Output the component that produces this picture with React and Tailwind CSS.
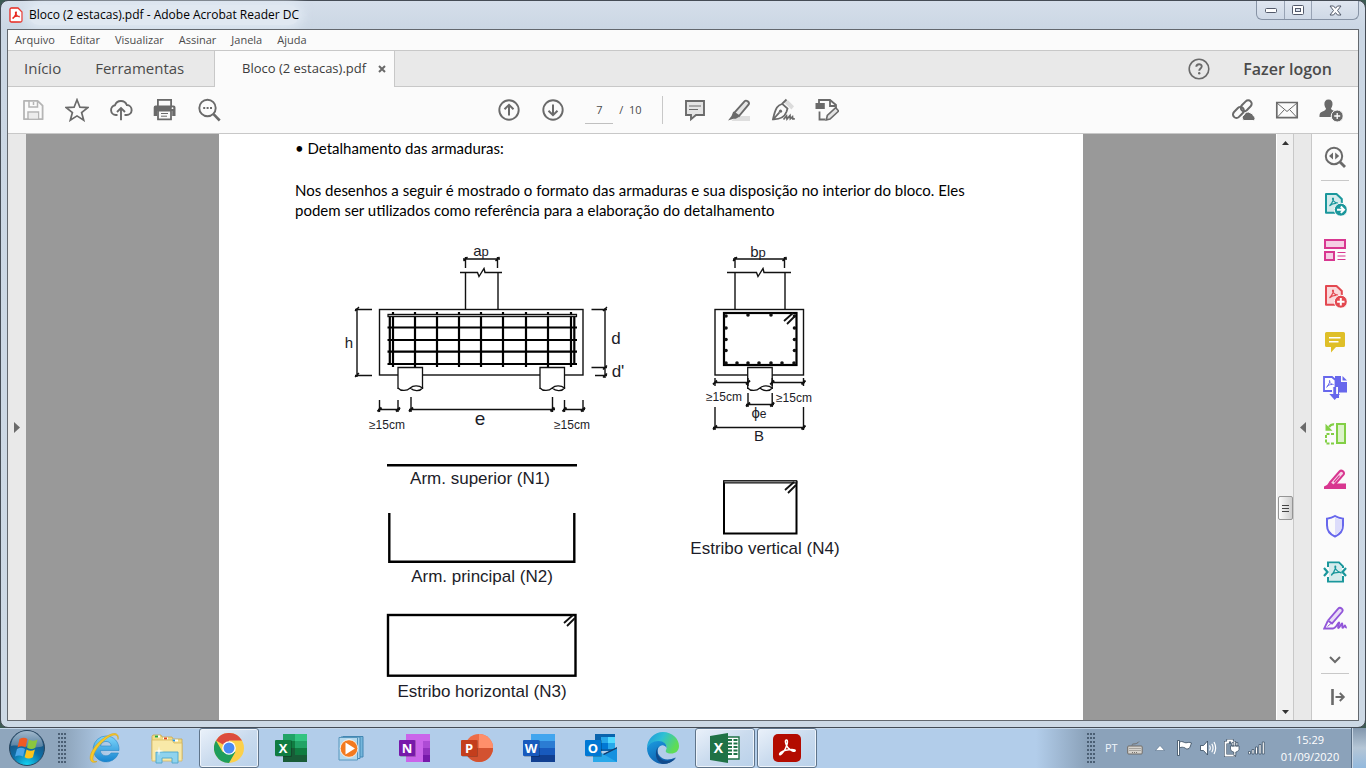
import React from "react";

/* ---------- shared helpers ---------- */

function Svg({ size = 24, box = "0 0 24 24", className = "", children }) {
  return (
    <svg width={size} height={size} viewBox={box} className={className} fill="none" aria-hidden="true">
      {children}
    </svg>
  );
}

function IconButton({ label, children }) {
  return (
    <button type="button" aria-label={label} className="flex h-6 w-6 shrink-0 items-center justify-center">
      {children}
    </button>
  );
}

/* ---------- toolbar icons ---------- */

const SaveIcon = () => (
  <Svg>
    <path d="M3 2.800h13.600l5 4.800v13.600H3z" stroke="#b5b5b5" strokeWidth="1.800" strokeLinejoin="round" />
    <path d="M8 3v6h8.500V3M12.500 4v3M7 21v-7h10.500v7" stroke="#b5b5b5" strokeWidth="1.500" />
    <path d="M8 15h9v5.500H8z" fill="#ececec" />
  </Svg>
);
const StarIcon = () => (
  <Svg>
    <path d="M12 1.800l2.900 7.400 7.900.4-6.200 5 2.100 7.600L12 17.900l-6.700 4.300 2.100-7.600-6.200-5 7.900-.4z" stroke="#6a6a6a" strokeWidth="1.700" />
  </Svg>
);
const CloudIcon = () => (
  <Svg>
    <path d="M8.500 17H6.800A4.900 4.900 0 0 1 6 7.300 6.300 6.300 0 0 1 17.800 7 5 5 0 0 1 17.500 17h-2" stroke="#6a6a6a" strokeWidth="1.900" />
    <path d="M12 22.200V10.500M8 14l4-4 4 4" stroke="#6a6a6a" strokeWidth="1.900" />
  </Svg>
);
const PrintIcon = () => (
  <Svg>
    <path d="M4 1h15v7H4z" fill="#6a6a6a" />
    <path d="M5.800 2.800h11.400V8H5.800z" fill="#fafafa" />
    <path d="M2.500 7.500h18a2 2 0 0 1 2 2v8.500h-3.300v-5H4v5H.7V9.500a2 2 0 0 1 1.800-2z" fill="#6a6a6a" />
    <path d="M5 12.500h13v8.800H5z" fill="#fafafa" stroke="#6a6a6a" strokeWidth="1.800" />
    <path d="M8 15.500h7M8 18.200h6" stroke="#6a6a6a" />
    <circle cx="19.500" cy="10.200" r=".9" fill="#fff" />
  </Svg>
);
const FindIcon = () => (
  <Svg>
    <circle cx="10.500" cy="10" r="8.200" stroke="#6a6a6a" strokeWidth="1.900" />
    <path d="M16.500 16.200l6.200 6.300" stroke="#6a6a6a" strokeWidth="2.600" />
    <path d="M6.200 9h2v2h-2zM9.600 9h2v2h-2zM13 9h2v2h-2z" fill="#6a6a6a" />
  </Svg>
);
const ArrowCircle = ({ down }) => (
  <Svg>
    <circle cx="12" cy="12" r="9.700" stroke="#6a6a6a" strokeWidth="1.900" />
    {down ? (
      <path d="M12 6.500v10.500M7.500 12.700l4.500 4.500 4.500-4.500" stroke="#6a6a6a" strokeWidth="2" />
    ) : (
      <path d="M12 17.500V7M7.500 11.300l4.500-4.500 4.500 4.500" stroke="#6a6a6a" strokeWidth="2" />
    )}
  </Svg>
);
const NoteIcon = () => (
  <Svg>
    <path d="M3 3h18v14h-8l-5 4.300V17H3z" fill="#e4e4e4" stroke="#6a6a6a" strokeWidth="1.900" />
    <path d="M6 8h12M6 11.500h9" stroke="#6a6a6a" strokeWidth="1.200" />
  </Svg>
);
const MarkerIcon = () => (
  <Svg>
    <path d="M9 18h14v5H4.500z" fill="#dedede" />
    <path d="M7.200 14.800L17.500 3.300c1.600-1.700 5.800.8 4 3.400L12 18z" fill="#e4e4e4" stroke="#6a6a6a" strokeWidth="1.900" />
    <path d="M6.300 13.500l6 5.200-3.500 2H6.600L1 22.500l3.500-4.500z" fill="#6a6a6a" />
  </Svg>
);
const PenIcon = () => (
  <Svg>
    <path d="M12.500 4l8 7.500 2.500-3.200-6-6.100z" fill="#dcdcdc" />
    <path d="M15.500 1.500L11 6c-4 1-6.500 3.500-9 15.300 6.500.2 11.500-2 13.500-7.500l1-3.300-5-4.400M2.500 21l6-6.700" stroke="#6a6a6a" strokeWidth="1.800" />
    <circle cx="9.500" cy="13.200" r="1.600" fill="#6a6a6a" />
    <path d="M12.500 21.500l3-3.500.5 3 3-3.500.3 3.300 2.200-2 .3 2h2" stroke="#6a6a6a" strokeWidth="1.700" />
  </Svg>
);
const SendDocIcon = () => (
  <Svg>
    <path d="M4 6V2h11l6 5v3M15 2v6h5" stroke="#6a6a6a" strokeWidth="1.800" />
    <path d="M.5 5h9.300v6H.5z" fill="#6a6a6a" />
    <path d="M4.500 13.500v8h6" stroke="#6a6a6a" strokeWidth="1.800" />
    <path d="M11.300 22l1-4.500 8.400-7.800 3 3.300-8.700 8z" fill="#e4e4e4" stroke="#6a6a6a" strokeWidth="1.600" />
  </Svg>
);
const LinkCloudIcon = () => (
  <Svg>
    <g stroke="#6a6a6a" strokeWidth="2">
      <rect x="9" y="4.300" width="12.500" height="7" rx="3.500" transform="rotate(-45 15.200 7.800)" />
      <rect x="1.200" y="11" width="12.500" height="7" rx="3.500" transform="rotate(-45 7.400 14.500)" />
    </g>
    <path d="M13 22.500a3 3 0 0 1 0-5.500 4 4 0 0 1 6.500-2 3.500 3.500 0 0 1 3 3 2.400 2.400 0 0 1 0 4.500z" fill="#6a6a6a" stroke="#fafafa" />
  </Svg>
);
const MailIcon = () => (
  <Svg>
    <path d="M1.800 4.500h20.400v15.200H1.800z" stroke="#6a6a6a" strokeWidth="1.700" />
    <path d="M2 5l10 8.500L22 5M2.500 19l7-7.500M21.500 19l-7-7.500" stroke="#6a6a6a" />
  </Svg>
);
const AddUserIcon = () => (
  <Svg>
    <path d="M9.500 1.500c3 0 4.300 2 4 5-.2 2-1 3.200-1.500 4 .2 1.700 2.500 2 5 3.500V19H.5c0-3.500.6-4.500 3-5.500 2-.8 3.400-1.300 3.500-3-.7-.8-1.400-2-1.600-4-.2-3 1.200-5 4.100-5z" fill="#6a6a6a" />
    <circle cx="18.200" cy="18" r="6" fill="#6a6a6a" stroke="#fafafa" />
    <path d="M18.200 15v6M15.200 18h6" stroke="#fff" strokeWidth="1.300" />
  </Svg>
);
const HelpIcon = () => (
  <Svg>
    <circle cx="12" cy="12" r="9.800" stroke="#6a6a6a" strokeWidth="1.600" />
    <path d="M9.300 9.800c.1-3.600 5.600-3.300 5.400-.3-.1 2-2.400 2-2.500 4.300" stroke="#6a6a6a" strokeWidth="1.900" />
    <circle cx="12.200" cy="16.300" r="1.200" fill="#6a6a6a" />
  </Svg>
);

/* ---------- side panel icons ---------- */

const PdfPage = ({ color, fill }) => (
  <>
    <path d="M3 1.900h10.500l5.300 5v13.800H3z" fill={fill} stroke={color} strokeWidth="2" strokeLinejoin="round" />
    <path d="M9.800 6c1.500 0 .3 4-3.300 8M9.800 6c-1 1 1 5 5.200 5.200M7 13.700c2-2 4.500-2.500 6-2.400" stroke={color} strokeWidth="1.200" />
  </>
);
const ZoomFitIcon = () => (
  <Svg>
    <circle cx="11" cy="11" r="8.200" stroke="#6a6a6a" strokeWidth="2" />
    <path d="M17 17l5 5" stroke="#6a6a6a" strokeWidth="2.800" />
    <path d="M10 7.500v7L6 11zM12.200 7.500v7l4-3.500z" fill="#6a6a6a" />
  </Svg>
);
const ExportIcon = () => (
  <Svg>
    <PdfPage color="#1a979c" fill="#d5ebec" />
    <circle cx="17.800" cy="17.700" r="6.500" fill="#1a979c" stroke="#fafafa" />
    <path d="M14 17.700h6M17.800 14.500l3.200 3.200-3.200 3.200" stroke="#fff" strokeWidth="2" />
  </Svg>
);
const OrganizeIcon = () => (
  <Svg>
    <path d="M2 2h20v8H2zM2 14h9v8H2z" fill="#f5cfe4" stroke="#d83790" strokeWidth="2" />
    <path d="M14.500 14.500h8M14.500 18h8M14.500 21.500h8" stroke="#d83790" strokeWidth="1.200" />
  </Svg>
);
const CreateIcon = () => (
  <Svg>
    <PdfPage color="#e34850" fill="#f9dadc" />
    <circle cx="17.800" cy="17.700" r="6.500" fill="#e34850" stroke="#fafafa" />
    <path d="M17.800 14v7.400M14.100 17.700h7.400" stroke="#fff" strokeWidth="2" />
  </Svg>
);
const CommentIcon = () => (
  <Svg>
    <path d="M3.500 2h17A1.500 1.500 0 0 1 22 3.500v12a1.500 1.500 0 0 1-1.500 1.500H13l-5 5.500V17H3.500A1.500 1.500 0 0 1 2 15.500v-12A1.500 1.500 0 0 1 3.500 2z" fill="#dfbf28" />
    <path d="M6 7.700h11.500M6 11.700h9.500" stroke="#fff" strokeWidth="1.600" />
  </Svg>
);
const CombineIcon = () => (
  <Svg>
    <path d="M12 0h6v6h6v10.500h-8V22h-4z" fill="#6767ec" />
    <path d="M19.500 0L24 4.500h-4.500z" fill="#6767ec" />
    <path d="M1 1h8l3.500 3v11H1z" fill="#fff" stroke="#6767ec" strokeWidth="1.800" />
    <path d="M6.500 4.500c1 0 0 3-3 7M6.500 4.500c-.5 1 .5 3.500 4 4M4 10.500c1.500-1.500 3-2 5-2" stroke="#6767ec" />
    <path d="M9 11h6v7h-6z" fill="#fafafa" />
    <path d="M10.300 11h2.800v7H17l-5.300 6-5.400-6h4z" fill="#6767ec" />
  </Svg>
);
const CompareIcon = () => (
  <Svg>
    <path d="M14 2h8v19h-8z" fill="#dcf3ca" stroke="#82cf45" strokeWidth="2" />
    <path d="M11 12H3v9.500h8" stroke="#82cf45" strokeWidth="2" strokeDasharray="3 1.500" />
    <path d="M11 2.500C9 2 7.500 3 6 5" stroke="#82cf45" strokeWidth="2.400" />
    <path d="M2.500 1.800v7H9.500z" fill="#82cf45" />
  </Svg>
);
const EditIcon = () => (
  <Svg>
    <path d="M11 15.500h12V21H1v-2.500l4-2z" fill="#d83790" />
    <path d="M7 14.500L16.500 3.500c2-2.200 6 .8 4 3.200L11 17.500l-5 .8z" fill="#f6d3e6" stroke="#d83790" strokeWidth="2" />
    <path d="M6.500 13.500l5.500 4-4.500 2.500-5-.5z" fill="#d83790" />
    <path d="M11 14l5.500-6.300" stroke="#d83790" strokeWidth="1.200" />
  </Svg>
);
const ShieldIcon = () => (
  <Svg>
    <path d="M12 2c2.500 1.600 5 2.300 8 2.700v6.500C20 17 16.500 20.500 12 22.500 7.500 20.500 4 17 4 11.200V4.700C7 4.300 9.500 3.600 12 2z" fill="#fafafa" stroke="#6767ec" strokeWidth="2" />
    <path d="M12 3.500c2 1.200 4.500 2 7 2.300v5.400c0 5-3 8-7 10z" fill="#dcdcfa" />
  </Svg>
);
const OptimizeIcon = () => (
  <Svg>
    <path d="M5 7V2.500H16L20 6.500V8M5 17v4.500h15V16" stroke="#1a979c" strokeWidth="2" />
    <path d="M6 3.500h9.500l3.500 3.500v13.500H6z" fill="#d5ebec" />
    <path d="M12.300 6c1 0 0 5-4 9.500M12.300 6c-1 1 1 6 6.200 7M8.300 14.500c2-1.600 4.500-2.300 8-2.200" stroke="#1a979c" strokeWidth="1.300" />
    <path d="M1 8l3.500 4L1 16M23 8l-3.500 4 3.500 4" stroke="#1a979c" strokeWidth="2.200" />
  </Svg>
);
const SignIcon = () => (
  <Svg>
    <path d="M5 14.500L15 2.800c2.300-2.500 6 .7 4 3.200L9 17.500l-3.500-2.500" fill="#e8dcf6" stroke="#9256d9" strokeWidth="1.900" />
    <path d="M5 14.500L1.200 22.500H10c3 0 5-6 6-6s-2 5.500-.5 5.500 2.500-4.500 3.500-4.500-.5 4.300.8 4.300 1.200-2.300 2-2.300.2 2.200 2 2" stroke="#9256d9" strokeWidth="1.800" />
    <path d="M8.500 17L4.500 20.500" stroke="#9256d9" />
  </Svg>
);
const ExitPanelIcon = () => (
  <Svg>
    <path d="M9.500 4v16" stroke="#6a6a6a" strokeWidth="2.600" />
    <path d="M12.500 12h8M16.800 8l4 4-4 4" stroke="#6a6a6a" strokeWidth="1.900" />
  </Svg>
);

const sideTools = [
  ["Exportar PDF", ExportIcon],
  ["Organizar páginas", OrganizeIcon],
  ["Criar PDF", CreateIcon],
  ["Comentário", CommentIcon],
  ["Combinar arquivos", CombineIcon],
  ["Comparar arquivos", CompareIcon],
  ["Editar PDF", EditIcon],
  ["Proteger", ShieldIcon],
  ["Otimizar PDF", OptimizeIcon],
  ["Preencher e assinar", SignIcon],
];

/* ---------- window chrome ---------- */

function TitleBar() {
  return (
    <header className="flex h-7 shrink-0 items-start justify-between">
      <div className="flex h-7 items-center gap-[6px] pl-[2px]">
        <svg width="14" height="16" viewBox="0 0 14 16" fill="none" aria-hidden="true">
          <path d="M1 2.500C1 1.500 1.500 1 2.500 1H9l4 4v8.500c0 1-.5 1.500-1.500 1.500h-9C1.500 15 1 14.500 1 13.500z" fill="#fff" stroke="#e8241b" strokeWidth="1.300" />
          <path d="M6.800 5c1.200 0 .2 3.500-3 6.500M6.800 5c-1 .6.600 4.500 4 4.800M3.500 11.500C5 9.500 8 8.800 10.500 9.500" stroke="#e8241b" strokeWidth="1.400" />
        </svg>
        <h1 className="rounded-full bg-[#e0e8f1] text-[12px] leading-5 text-black shadow-[0_0_12px_4px_rgba(229,237,246,0.8)]">
          Bloco (2 estacas).pdf - Adobe Acrobat Reader DC
        </h1>
      </div>
      <div className="flex h-[19px] overflow-hidden rounded-b-md border border-t-0 border-[#8793a5] bg-linear-to-b from-[#dfe6f0] to-[#cfd9e6]">
        <button type="button" aria-label="Minimizar" className="flex w-7 items-center justify-center border-r border-[#98a3b4]">
          <svg width="12" height="5" viewBox="0 0 12 5" aria-hidden="true"><rect x=".5" y=".5" width="11" height="4" rx="1" fill="#fff" stroke="#535a6b" /></svg>
        </button>
        <button type="button" aria-label="Restaurar" className="flex w-[27px] items-center justify-center border-r border-[#98a3b4]">
          <svg width="12" height="10" viewBox="0 0 12 10" aria-hidden="true">
            <rect x=".5" y=".5" width="11" height="9" rx="1" fill="#fff" stroke="#535a6b" />
            <rect x="3.500" y="3.500" width="5" height="3" fill="#dbe3ee" stroke="#535a6b" />
          </svg>
        </button>
        <button type="button" aria-label="Fechar" className="flex w-[46px] items-center justify-center">
          <svg width="13" height="11" viewBox="0 0 13 11" aria-hidden="true">
            <path d="M1 1h3.500l2 2.300L8.500 1H12L8.500 5.500 12 10H8.500l-2-2.400L4.500 10H1l3.500-4.500z" fill="#fff" stroke="#535a6b" />
          </svg>
        </button>
      </div>
    </header>
  );
}

function MenuBar() {
  return (
    <nav className="flex h-[21px] shrink-0 items-center gap-[15px] border-b border-[#c8c8c8] bg-[#fbfbfb] pl-[7px] text-[11px] text-[#4b4b4b]">
      {["Arquivo", "Editar", "Visualizar", "Assinar", "Janela", "Ajuda"].map((m) => (
        <button type="button" key={m}>{m}</button>
      ))}
    </nav>
  );
}

function TabBar() {
  return (
    <div className="flex h-9 shrink-0 bg-[#e9e9e9] text-[15px] text-[#4b4b4b]">
      <div className="flex w-[206px] items-center gap-[34px] border-b border-[#c8c8c8] pl-4">
        <button type="button">Início</button>
        <button type="button">Ferramentas</button>
      </div>
      <div className="flex w-[181px] items-center justify-between border-x border-[#c8c8c8] bg-[#fbfbfb] pr-2 pl-[27px]">
        <button type="button" className="text-[13px] whitespace-nowrap text-[#3c3c3c]">Bloco (2 estacas).pdf</button>
        <button type="button" aria-label="Fechar guia">
          <Svg size={8} box="0 0 8 8"><path d="M1 1l6 6M7 1L1 7" stroke="#6a6a6a" strokeWidth="2" /></Svg>
        </button>
      </div>
      <div className="flex flex-1 items-center justify-end gap-8 border-b border-[#c8c8c8] pr-[26px]">
        <IconButton label="Ajuda"><HelpIcon /></IconButton>
        <button type="button" className="text-[16px] font-semibold">Fazer logon</button>
      </div>
    </div>
  );
}

function Toolbar() {
  return (
    <div className="grid h-[47px] shrink-0 grid-cols-[1fr_auto_1fr] items-center border-b border-[#c8c8c8] bg-[#fbfbfb]">
      <div className="flex gap-5 pl-[13px]">
        <IconButton label="Salvar"><SaveIcon /></IconButton>
        <IconButton label="Favorito"><StarIcon /></IconButton>
        <IconButton label="Enviar à nuvem"><CloudIcon /></IconButton>
        <IconButton label="Imprimir"><PrintIcon /></IconButton>
        <IconButton label="Localizar"><FindIcon /></IconButton>
      </div>
      <div className="mr-[30px] flex items-center gap-5">
        <IconButton label="Página anterior"><ArrowCircle /></IconButton>
        <IconButton label="Próxima página"><ArrowCircle down /></IconButton>
        <div className="flex items-center text-[11px] text-[#4b4b4b]">
          <input aria-label="Página" defaultValue="7" className="h-7 w-7 border-b border-[#c0c0c0] bg-transparent text-center outline-none" />
          <span className="pl-[6px]">/&nbsp; 10</span>
        </div>
        <div className="h-7 w-px bg-[#c8c8c8]" />
        <IconButton label="Adicionar nota"><NoteIcon /></IconButton>
        <IconButton label="Realçar texto"><MarkerIcon /></IconButton>
        <IconButton label="Assinar"><PenIcon /></IconButton>
        <IconButton label="Enviar documento"><SendDocIcon /></IconButton>
      </div>
      <div className="flex justify-end gap-5 pr-[15px]">
        <IconButton label="Compartilhar link"><LinkCloudIcon /></IconButton>
        <IconButton label="Enviar por e-mail"><MailIcon /></IconButton>
        <IconButton label="Compartilhar"><AddUserIcon /></IconButton>
      </div>
    </div>
  );
}

/* ---------- drawings of the pile cap ---------- */

const stirrups = [393, 415, 437, 459, 481, 503, 526, 548, 571];

function Pile({ x }) {
  return (
    <g strokeWidth="1.300">
      <path d={`M${x} 389V367.500h24.500V389`} fill="#fff" />
      <path d={`M${x} 388c3 3.500 9 3 12.200 0s9-2.500 12.300 0c-3 4-9 3-12.300 0`} />
    </g>
  );
}

function Hook({ x, y }) {
  return <path d={`M${x} ${y}l-9 8M${x + 2} ${y + 3}l-8 8`} strokeWidth="1.800" />;
}

function Figures() {
  return (
    <svg viewBox="219 236 864 484" className="mt-4 block h-auto w-full font-['Liberation_Sans',sans-serif]" role="img" aria-label="Armaduras do bloco">
      <g stroke="#111" fill="none" strokeWidth="1.400">
        {/* front view */}
        <path d="M463 259h37M465.500 257v11M497.500 257v11M463.500 261l4-4M495.500 261l4-4" />
        <path d="M460 272.500h17.500l1.500 4 5-8 1 4h17M465.500 272v37M498 272v37" />
        <rect x="379.500" y="309.500" width="203.500" height="65.500" />
        <g stroke="#000" strokeWidth="2.200">
          {stirrups.map((x) => <path key={x} d={`M${x} 312v55`} />)}
          <path d="M387.500 327.500H577M387.500 340H577M387.500 351.700H577M387.500 364H577" />
          <path d="M389.800 315v49M574.300 315v49" />
        </g>
        <rect x="388" y="314.400" width="188.500" height="2.200" fill="#aaa" strokeWidth="1.200" />
        <Pile x={398} />
        <Pile x={540} />
        <path d="M372 309.500h-17M372 375.500h-17M357 308v69M355 311l4-4M355 377l4-4" />
        <path d="M591.500 309.500H607M591.500 367.500H607M595 375.500h12M605 308v70M603 311l4-4M603 369.500l4-4M603 377.500l4-4" />
        <path d="M379.500 400v12M398 400v12M378 409.500h22M411 397v15M409 409.500h146M552.500 397v15M564.500 400v12M583 400v12M563 409.500h22" />
        <path d="M377.500 411.500l4-4M396 411.500l4-4M409 411.500l4-4M550.500 411.500l4-4M562.500 411.500l4-4M581 411.500l4-4" strokeWidth="2" />

        {/* side view */}
        <path d="M733 259h54M735 257v11M784.500 257v11M733 261l4-4M782.500 261l4-4" />
        <path d="M727 272.500h29.500l1.500 4 5-8 1 4h27M735 272v37M785 272v37" />
        <rect x="715" y="309.500" width="88.500" height="65.500" />
        <rect x="724" y="313" width="72.500" height="52" stroke="#000" strokeWidth="2.200" />
        <Hook x={793} y={313} />
        <g fill="#111" stroke="none">
          {[748, 771].map((x) => <circle key={x} cx={x} cy="315" r="1.800" />)}
          {[726, 737, 748, 759, 771, 782, 794].map((x) => <circle key={x} cx={x} cy="363" r="1.800" />)}
          {[316, 328, 339.500, 350.500].map((y) => (
            <g key={y}><circle cx="726" cy={y} r="1.800" /><circle cx="794.500" cy={y} r="1.800" /></g>
          ))}
        </g>
        <Pile x={747.700} />
        <path d="M715 378v8M748 378v8M772.200 378v8M803.500 378v8M714 382.500h35M771 382.500h34M748 393v14M772.200 393v14M746 404.500h28M715 407v23M803.500 407v23M713 427.500h92" />
        <path d="M713 384.500l4-4M746 384.500l4-4M770.200 384.500l4-4M801.500 384.500l4-4M746 406.500l4-4M770.200 406.500l4-4M713 429.500l4-4M801.500 429.500l4-4" strokeWidth="1.800" />

        {/* individual bars */}
        <g stroke="#000" strokeWidth="2.400">
          <path d="M387 465.300h190M389.300 513v48.700h185V513" />
          <rect x="388" y="615" width="187.500" height="60.700" />
          <path d="M724 481v52.500h72.500V481" strokeWidth="2" />
        </g>
        <rect x="723.700" y="480.700" width="73" height="2.200" fill="#aaa" strokeWidth="1.200" />
        <Hook x={573} y={615} />
        <Hook x={794} y={482} />
      </g>
      <g fill="#1c1c28" textAnchor="middle" fontSize="15">
        <text x="481" y="256">a<tspan fontSize="13">p</tspan></text>
        <text x="349" y="348">h</text>
        <text x="616" y="344" fontSize="17">d</text>
        <text x="618" y="377" fontSize="17">d'</text>
        <text x="480" y="425" fontSize="19">e</text>
        <text x="387" y="429" fontSize="12">≥15cm</text>
        <text x="572" y="429" fontSize="12">≥15cm</text>
        <text x="758" y="257">b<tspan fontSize="13">p</tspan></text>
        <text x="724" y="401" fontSize="12">≥15cm</text>
        <text x="794" y="402" fontSize="12">≥15cm</text>
        <text x="759" y="418" fontSize="15">ϕ<tspan fontSize="12">e</tspan></text>
        <text x="759" y="441" fontSize="15">B</text>
        <g fontSize="17">
          <text x="480" y="484">Arm. superior (N1)</text>
          <text x="482" y="582">Arm. principal (N2)</text>
          <text x="482" y="697">Estribo horizontal (N3)</text>
          <text x="765" y="554">Estribo vertical (N4)</text>
        </g>
      </g>
    </svg>
  );
}

function DocumentArea() {
  return (
    <main className="flex min-w-0 flex-1 justify-center overflow-hidden bg-[#999999]">
      <article className="w-full max-w-[864px] bg-white pt-1 font-['Lato',sans-serif] text-[15px] leading-5 text-black">
        <div className="px-[76px]">
          <p>• Detalhamento das armaduras:</p>
          <p className="mt-[22px]">
            Nos desenhos a seguir é mostrado o formato das armaduras e sua disposição no interior do bloco. Eles
            <br />
            podem ser utilizados como referência para a elaboração do detalhamento
          </p>
        </div>
        <Figures />
      </article>
    </main>
  );
}

function ScrollTrack() {
  return (
    <div className="flex w-[17px] shrink-0 flex-col items-center border-l border-white bg-[#f0f0f0]">
      <button type="button" aria-label="Rolar para cima" className="flex h-[17px] w-full items-center justify-center">
        <svg width="7" height="4" viewBox="0 0 7 4" aria-hidden="true"><path d="M3.500 0L7 4H0z" fill="#333" /></svg>
      </button>
      <div className="flex-[345]" />
      <div className="flex h-6 w-[15px] flex-col items-center justify-center gap-[2px] rounded-[2px] border border-[#959595] bg-linear-to-r from-[#fafafa] to-[#cfcfcf]">
        <div className="h-px w-[7px] bg-[#444]" />
        <div className="h-px w-[7px] bg-[#444]" />
        <div className="h-px w-[7px] bg-[#444]" />
      </div>
      <div className="flex-[183]" />
      <button type="button" aria-label="Rolar para baixo" className="flex h-[17px] w-full items-center justify-center">
        <svg width="7" height="4" viewBox="0 0 7 4" aria-hidden="true"><path d="M0 0h7L3.500 4z" fill="#333" /></svg>
      </button>
    </div>
  );
}

function SidePanel() {
  return (
    <aside className="flex w-[46px] shrink-0 flex-col items-center overflow-hidden bg-[#fbfbfb] pt-[11px]">
      <IconButton label="Ajustar zoom"><ZoomFitIcon /></IconButton>
      <div className="my-[11px] h-px w-7 shrink-0 bg-[#c8c8c8]" />
      <div className="flex flex-col gap-[22px]">
        {sideTools.map(([label, Icon]) => (
          <IconButton key={label} label={label}><Icon /></IconButton>
        ))}
      </div>
      <button type="button" aria-label="Mais ferramentas" className="mt-6 flex h-3 items-center">
        <svg width="12" height="8" viewBox="0 0 12 8" fill="none" aria-hidden="true"><path d="M1 1l5 5 5-5" stroke="#6a6a6a" strokeWidth="2" /></svg>
      </button>
      <div className="mt-[7px] mb-[11px] h-px w-7 shrink-0 bg-[#c8c8c8]" />
      <IconButton label="Recolher painel"><ExitPanelIcon /></IconButton>
    </aside>
  );
}

/* ---------- taskbar ---------- */

function OfficeTile({ letter, tile, children }) {
  return (
    <svg width="32" height="32" viewBox="0 0 32 32" aria-hidden="true">
      {children}
      <rect x="1" y="8" width="16" height="17" rx="1" fill="#000" opacity=".2" />
      <rect x="0" y="8" width="16" height="16" rx="1" fill={tile} />
      <text x="8" y="20.500" textAnchor="middle" fontSize="13" fontWeight="700" fill="#fff">{letter}</text>
    </svg>
  );
}

const IeIcon = () => (
  <svg width="34" height="34" viewBox="0 0 34 34" aria-hidden="true">
    <defs><linearGradient id="ie" x2="0" y2="1"><stop stopColor="#7fd6fb" /><stop offset="1" stopColor="#1583cf" /></linearGradient></defs>
    <path d="M18 5a13 13 0 1 0 12.500 17H23c-1 1.800-2.700 2.800-5 2.800-3.200 0-5.500-2-5.700-5.300H31C31.500 11 26 5 18 5zm-5.500 10c.5-2.800 2.600-4.600 5.500-4.600s5 1.800 5.300 4.600z" fill="url(#ie)" stroke="#2a86c4" strokeWidth=".6" />
    <path d="M30 8.500c1.500-5-2-8-9-4.500C11 8.500 0 22 2.500 29c1 2.500 3.500 3 6.500 1.500-3.500.5-4.500-1-4-4C6 19 16 7.500 24 4.500c4-1.500 6 0 6 4z" fill="#f7c928" stroke="#d59e12" strokeWidth=".5" />
  </svg>
);
const ExplorerIcon = () => (
  <svg width="34" height="32" viewBox="0 0 34 32" aria-hidden="true">
    <path d="M2 4.500L3 3h8l1 2h10l1 2h9v20H2z" fill="#f2dc85" stroke="#c9a74c" strokeWidth=".8" />
    <path d="M5 3.500h5v2H5zM13 5.500h5v2h-5zM22 7.500h6v2h-6z" fill="#fff" />
    <path d="M5 3.500h3v2H5z" fill="#26a635" /><path d="M14 5.500h3v2h-3z" fill="#e0481f" /><path d="M22 7.500h3v2h-3z" fill="#2196e8" />
    <path d="M2 8h20l2 3h8v18H2z" fill="#f8e9a8" stroke="#d7b860" strokeWidth=".8" />
    <path d="M6 31V20h22v11h-6v-5H12v5z" fill="#8fd3ee" stroke="#4ca5cb" strokeWidth=".9" />
    <path d="M9 14l.7 4.300L14 19l-4.300.7L9 24l-.7-4.300L4 19l4.300-.7z" fill="#fff" opacity=".9" />
  </svg>
);
const ChromeIcon = () => (
  <svg width="30" height="30" viewBox="0 0 30 30" aria-hidden="true">
    <circle cx="15" cy="15" r="15" fill="#fcd04a" />
    <path d="M15 15L2 7.500A15 15 0 0 1 28 7.500H15z" fill="#dc4b3e" />
    <path d="M2 7.500A15 15 0 0 0 15 30l6.500-11.300L8.500 18.700z" fill="#1e9e5c" />
    <circle cx="15" cy="15" r="6.800" fill="#fff" /><circle cx="15" cy="15" r="5.500" fill="#4a8af4" />
  </svg>
);
const ExcelTile = () => (
  <OfficeTile letter="X" tile="#107c41">
    <path d="M8 2h12v14H8z" fill="#21a366" /><path d="M20 2h12v7H20z" fill="#33c481" /><path d="M20 9h12v7H20z" fill="#21a366" />
    <path d="M8 9h12v7H8z" fill="#107c41" /><path d="M20 16h12v7H20z" fill="#107c41" /><path d="M8 16h12v7h12v7H8z" fill="#185c37" />
  </OfficeTile>
);
const MediaIcon = () => (
  <svg width="30" height="30" viewBox="0 0 30 30" aria-hidden="true">
    <path d="M5 3.500h20v20.500H5z" fill="#74b6dc" stroke="#4387b3" /><path d="M3 4h19v21.500H3z" fill="#a5d2ed" stroke="#4387b3" />
    <path d="M1 4.500h18.500v22.500H1z" fill="#b5d9ed" stroke="#5696bd" />
    <circle cx="11" cy="15.500" r="8.800" fill="#f37a1f" stroke="#fff" strokeWidth=".8" />
    <path d="M7.500 9.500l9.500 6-9.500 6z" fill="#fff" />
  </svg>
);
const OneNoteTile = () => (
  <OfficeTile letter="N" tile="#7719aa">
    <path d="M7 2h24v28H7z" fill="#ca64ea" /><path d="M24 9h7v7h-7z" fill="#ae4bd5" /><path d="M24 16h7v7h-7z" fill="#9332bf" /><path d="M24 23h7v7h-7z" fill="#7719aa" />
  </OfficeTile>
);
const PowerPointTile = () => (
  <OfficeTile letter="P" tile="#c43e1c">
    <circle cx="18" cy="16" r="14" fill="#ed6c47" /><path d="M18 2a14 14 0 0 1 14 14H18z" fill="#ff8f6b" /><path d="M4 16h28a14 14 0 0 1-28 0z" fill="#d35230" />
  </OfficeTile>
);
const WordTile = () => (
  <OfficeTile letter="W" tile="#185abd">
    <path d="M8 2h24v7H8z" fill="#41a5ee" /><path d="M8 9h24v7H8z" fill="#2b7cd3" /><path d="M8 16h24v7H8z" fill="#185abd" /><path d="M8 23h24v7H8z" fill="#103f91" />
  </OfficeTile>
);
const OutlookTile = () => (
  <OfficeTile letter="O" tile="#0078d4">
    <path d="M10 2h20v17H10z" fill="#0a64ad" /><path d="M16 5h7v6h-7z" fill="#28a8ea" /><path d="M23 5h7v6h-7z" fill="#50d9ff" /><path d="M16 11h7v6h-7z" fill="#0078d4" /><path d="M23 11h7v6h-7z" fill="#28a8ea" />
    <path d="M8 16l12 7 12-7v14H8z" fill="#28a8ea" /><path d="M18 22l14-6v14z" fill="#1490df" /><path d="M18 22l14-7v1.500l-13 6.500z" fill="#123b6d" />
  </OfficeTile>
);
const EdgeIcon = () => (
  <svg width="32" height="32" viewBox="0 0 32 32" aria-hidden="true">
    <defs>
      <linearGradient id="edgeTop" x2="1" y2=".4"><stop stopColor="#1d95dc" /><stop offset=".5" stopColor="#2fc0d4" /><stop offset="1" stopColor="#5fdc55" /></linearGradient>
      <linearGradient id="edgeBody" x2=".6" y2="1"><stop stopColor="#1b9ce0" /><stop offset="1" stopColor="#0c5cab" /></linearGradient>
    </defs>
    <path d="M0 16A16 16 0 0 1 16 0c9 0 16 6.500 16 14 0 5-3.500 7.500-8 7.500s-6-1.800-5-3.500c2-3 0-8-6.500-8S2 12 0 16z" fill="url(#edgeTop)" />
    <path d="M0 16c1.500-4 6-7 11.500-7 5 0 8.500 3 8 7-1-2-3-3-5-2.500-4 1-5 6-2.500 9.500 4 6 11 5 16.500 2.500C26 29.500 21 32 16 32A16 16 0 0 1 0 16z" fill="url(#edgeBody)" />
    <path d="M11.500 14.500c-3 5 0 14 8 14.500 4 0 7-1.500 9.500-3.500-2.500 4-7.500 6.500-13 6.500C8 30 7 19 11.500 14.500z" fill="#114a8b" />
  </svg>
);
const Excel2013Icon = () => (
  <svg width="30" height="32" viewBox="0 0 30 32" aria-hidden="true">
    <path d="M17 5h12v22H17z" fill="#fff" stroke="#1f7246" strokeWidth="1.400" />
    <path d="M18 8h4M18 11.500h4M18 15h4M18 18.500h4M18 22h4M23.500 8h4M23.500 11.500h4M23.500 15h4M23.500 18.500h4M23.500 22h4" stroke="#1f7246" strokeWidth="2" />
    <path d="M0 4l18-3v30L0 28z" fill="#1f7246" />
    <text x="8.500" y="21" textAnchor="middle" fontSize="14" fontWeight="700" fill="#fff">X</text>
  </svg>
);
const AcrobatIcon = () => (
  <svg width="28" height="28" viewBox="0 0 28 28" fill="none" aria-hidden="true">
    <rect width="28" height="28" rx="5" fill="#b30b00" />
    <path d="M13.200 6c2-.5 1.500 4.500-1 9-2.200 3.800-4.700 6.500-5.500 5.500s2-3.200 6-4.200c4-1 9.500-1.300 9.500.3s-4.700.4-7.200-2.800S11.700 6.400 13.200 6z" stroke="#fff" strokeWidth="1.500" />
  </svg>
);

const taskItems = [
  ["Internet Explorer", IeIcon, false],
  ["Explorador de arquivos", ExplorerIcon, false],
  ["Google Chrome", ChromeIcon, true],
  ["Excel", ExcelTile, false],
  ["Media Player", MediaIcon, false],
  ["OneNote", OneNoteTile, false],
  ["PowerPoint", PowerPointTile, false],
  ["Word", WordTile, false],
  ["Outlook", OutlookTile, false],
  ["Edge", EdgeIcon, false],
  ["Excel 2013", Excel2013Icon, true],
  ["Acrobat Reader", AcrobatIcon, true],
];

function StartOrb() {
  return (
    <svg width="38" height="38" viewBox="0 0 38 38" aria-hidden="true">
      <defs>
        <radialGradient id="orb" cx=".5" cy="1" r=".9"><stop stopColor="#14d8f5" /><stop offset=".5" stopColor="#0d6fa8" /><stop offset="1" stopColor="#1f4b73" /></radialGradient>
        <linearGradient id="orbShine" x2="0" y2="1"><stop stopColor="#b8ccdc" /><stop offset="1" stopColor="#5e84a3" /></linearGradient>
      </defs>
      <circle cx="19" cy="19" r="17.500" fill="url(#orb)" stroke="#29465f" />
      <path d="M3 17a16 15 0 0 1 32 0c-9 4-23-2-32 0z" fill="url(#orbShine)" opacity=".85" />
      <path d="M11.500 10c3-1.800 5.500-1.600 8 0l-2 8.300c-2.700-1.600-5.300-1.400-8 .2z" fill="#ee5a24" />
      <path d="M21 10.500c3 1.700 5.500 1.700 8.500 0l-2.200 8.300c-2.700 1.700-5.400 1.500-8.200 0z" fill="#8cc63e" />
      <path d="M9 20c2.700-1.600 5.300-1.600 8 0l-2 7.500c-2.600-1.500-5.200-1.500-8 0z" fill="#4aa6e8" />
      <path d="M18.600 20.500c2.700 1.600 5.500 1.600 8.300 0l-2 7.700c-2.800 1.600-5.500 1.600-8.300 0z" fill="#fcc41c" />
    </svg>
  );
}

function Grip() {
  return (
    <svg width="9" height="31" viewBox="0 0 9 31" aria-hidden="true" className="shrink-0">
      {[0, 4, 8, 12, 16, 20, 24, 28].map((y) => (
        <path key={y} d={`M0 ${y}h2v2H0zM3 ${y}h2v2H3zM6 ${y}h2v2H6z`} fill="#4b5f74" />
      ))}
    </svg>
  );
}

function Tray() {
  return (
    <div className="flex h-full items-center">
      <Grip />
      <span className="ml-[9px] w-4 text-[11px] text-[#eef4fa]">PT</span>
      <svg width="16" height="14" viewBox="0 0 16 14" fill="none" aria-hidden="true" className="ml-[6px]">
        <rect x=".7" y="5" width="14.500" height="8" rx="1" fill="#d6d3cd" stroke="#6f6b66" />
        <path d="M2.500 7.500h11M2.500 9.500h11M5 11.500h6" stroke="#77736e" strokeDasharray="1 1" />
        <path d="M5 4.500c0-3 4 0 7-4" stroke="#6f6b66" />
      </svg>
      <svg width="10" height="6" viewBox="0 0 10 6" aria-hidden="true" className="ml-3"><path d="M5 .5L9.500 5.500h-9z" fill="#fff" stroke="#46617d" strokeWidth=".5" /></svg>
      <svg width="18" height="18" viewBox="0 0 18 18" aria-hidden="true" className="ml-[10px]">
        <path d="M2.500 1.500h2v15h-2z" fill="#fff" stroke="#33475c" strokeWidth=".8" />
        <path d="M4.500 3c3-1.500 4.500 1 6.500.8 1.500-.1 3-1 5.500.2-1 2-1 4-2.500 5.500-2 .8-3 .5-4-.6-2-.8-3.500-1-5.500 0z" fill="#fff" stroke="#33475c" strokeWidth=".8" />
      </svg>
      <svg width="18" height="18" viewBox="0 0 18 18" fill="none" aria-hidden="true" className="ml-[6px]">
        <path d="M1.500 6.500h3l4-4.500v14l-4-4.500h-3z" fill="#fff" stroke="#33475c" strokeWidth=".8" />
        <path d="M10.500 6.500q1.500 2.500 0 5M12.800 4.800q2.500 4.200 0 8.400M15 3q3.300 6 0 12" stroke="#fff" strokeWidth="1.200" />
      </svg>
      <svg width="18" height="18" viewBox="0 0 18 18" fill="none" aria-hidden="true" className="ml-[6px]">
        <path d="M2.500 3.500h2.500v-2h4v2h2.500v13h-9z" fill="#7f95ab" stroke="#33475c" strokeWidth="3" />
        <path d="M2.500 3.500h2.500v-2h4v2h2.500v13h-9z" stroke="#fff" strokeWidth="1.800" />
        <path d="M7.500 7h8.500v3.500q-1 2.500-3.200 2.500v3.500h-2V13q-3-.3-3.300-3zM9 3.500h1.800V7H9zM13 3.500h1.800V7H13z" fill="#fff" stroke="#33475c" strokeWidth=".7" />
      </svg>
      <svg width="17" height="14" viewBox="0 0 17 14" aria-hidden="true" className="ml-[7px]">
        <path d="M.5 10.500h2v2.500h-2zM4 8.500h2V13H4zM7.500 6h2v7h-2zM11 3.500h2V13h-2zM14.300 1h2v12h-2z" fill="#fff" stroke="#33475c" strokeWidth=".7" />
      </svg>
      <div className="mr-2 ml-3 w-[66px] text-center text-[11px] leading-[17px] text-white">
        <div>15:29</div>
        <div>01/09/2020</div>
      </div>
      <button type="button" aria-label="Mostrar área de trabalho" className="h-full w-[15px] border-l border-[#566b82] bg-linear-to-b from-[#8297ad] via-[#b5c6d6] to-[#93b9dd] shadow-[inset_1px_0_0_#c9d7e5]" />
    </div>
  );
}

function Taskbar() {
  return (
    <footer className="flex h-10 shrink-0 items-center justify-between bg-[linear-gradient(90deg,#8fa6bd_0,#8fa6bd_66px,#b2cdea_110px,#b2cdea_calc(100%-330px),#8ba2ba_calc(100%-280px))] shadow-[inset_0_1px_0_#c3d6e9]">
      <div className="flex h-full items-center">
        <button type="button" aria-label="Iniciar" className="ml-2 flex w-[50px] items-center"><StartOrb /></button>
        <Grip />
        <div className="ml-2 flex h-full items-stretch gap-[2px]">
          {taskItems.map(([label, Icon, open]) => (
            <button
              type="button"
              key={label}
              aria-label={label}
              className={
                open
                  ? "flex w-[60px] items-center justify-center rounded-[3px] border border-[#5f748a] bg-linear-to-br from-[#eaf1fa] via-[#cadbee] to-[#b9d1ea] shadow-[inset_0_0_0_1px_#eef4fb]"
                  : "flex w-[60px] items-center justify-center"
              }
            >
              <Icon />
            </button>
          ))}
        </div>
      </div>
      <Tray />
    </footer>
  );
}

/* ---------- page ---------- */

export default function App() {
  return (
    <div className="flex h-screen flex-col overflow-hidden bg-[#3c5a52] font-['Open_Sans',sans-serif]">
      <div className="flex min-h-0 flex-1 flex-col rounded-lg border border-[#454c55] bg-[linear-gradient(180deg,#d5deea_0,#cbd7e4_28px,#cdd9e5_100%)] px-[6px] pb-[6px]">
        <TitleBar />
        <div className="flex min-h-0 flex-1 flex-col border border-[#63686e] bg-[#fbfbfb]">
          <MenuBar />
          <TabBar />
          <Toolbar />
          <div className="flex min-h-0 flex-1">
            <button type="button" aria-label="Mostrar painel de navegação" className="flex w-[18px] shrink-0 items-center justify-center bg-[#e9e9e9]">
              <svg width="6" height="11" viewBox="0 0 6 11" aria-hidden="true"><path d="M0 0l6 5.500L0 11z" fill="#6a6a6a" /></svg>
            </button>
            <DocumentArea />
            <ScrollTrack />
            <button type="button" aria-label="Ocultar painel de ferramentas" className="flex w-[19px] shrink-0 items-center justify-center border-x border-[#c8c8c8] bg-[#e9e9e9]">
              <svg width="6" height="11" viewBox="0 0 6 11" aria-hidden="true"><path d="M6 0L0 5.500 6 11z" fill="#6a6a6a" /></svg>
            </button>
            <SidePanel />
          </div>
        </div>
      </div>
      <Taskbar />
    </div>
  );
}
